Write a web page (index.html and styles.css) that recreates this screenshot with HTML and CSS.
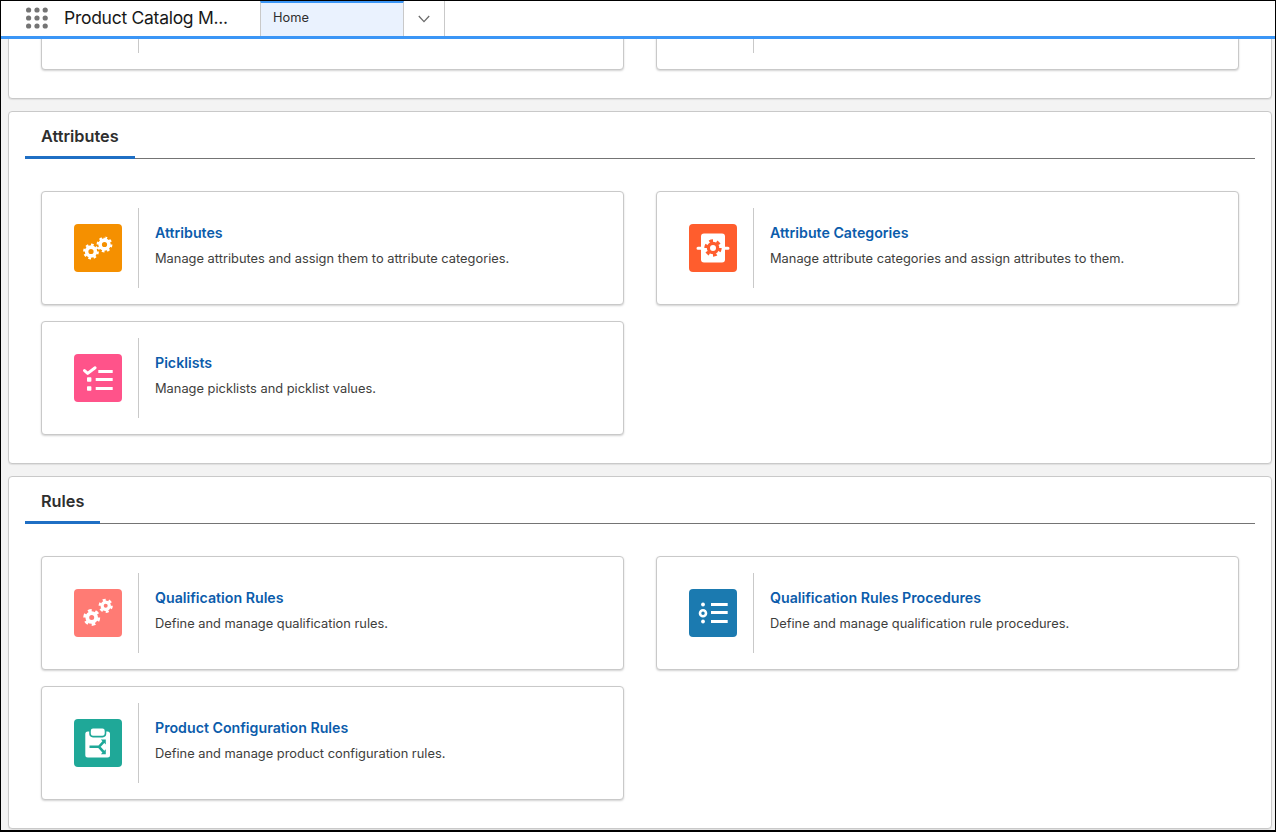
FILE: index.html
```html
<!DOCTYPE html>
<html lang="en">
<head>
<meta charset="utf-8">
<title>Product Catalog Management</title>
<link rel="stylesheet" href="styles.css">
</head>
<body>
<div class="frame">
  <header class="topbar">
    <div class="launcher" aria-label="App launcher">
      <svg viewBox="0 0 24 24" width="24" height="24"><g class="grid-dots"><circle cx="3.6" cy="4" r="2.6"/><circle cx="12" cy="4" r="2.6"/><circle cx="20.2" cy="4" r="2.6"/><circle cx="3.6" cy="12" r="2.6"/><circle cx="12" cy="12" r="2.6"/><circle cx="20.2" cy="12" r="2.6"/><circle cx="3.6" cy="20" r="2.6"/><circle cx="12" cy="20" r="2.6"/><circle cx="20.2" cy="20" r="2.6"/></g></svg>
    </div>
    <div class="app-name">Product Catalog M...</div>
    <div class="tab-active">Home</div>
    <div class="tab-more">
      <svg viewBox="0 0 12 8" width="12" height="8"><path class="chev" d="M.8 1 6 6.6 11.2 1"/></svg>
    </div>
  </header>
  <main class="scroll">
    <section class="panel panel-cut">
      <div class="grid">
        <div class="card"><div class="icon-slot"></div><div class="body"></div></div>
        <div class="card"><div class="icon-slot"></div><div class="body"></div></div>
      </div>
    </section>

    <section class="panel">
      <div class="tabs"><h2 class="tab-title">Attributes</h2></div>
      <div class="grid">
        <article class="card">
          <div class="icon-slot">
            <svg class="icon i-orange" viewBox="0 0 48 48">
              <circle class="teeth t8" cx="17" cy="27.5" r="6.8" pathLength="16"/><circle class="ring" cx="17" cy="27.5" r="4.4"/>
              <circle class="teeth t8" cx="30.5" cy="20.5" r="6.8" pathLength="16"/><circle class="ring" cx="30.5" cy="20.5" r="4.4"/>
            </svg>
          </div>
          <div class="body"><a class="title">Attributes</a><p class="desc">Manage attributes and assign them to attribute categories.</p></div>
        </article>
        <article class="card">
          <div class="icon-slot">
            <svg class="icon i-red" viewBox="0 0 48 48">
              <path class="wl round" d="M9 24.2h3M36 24.2h3"/>
              <rect class="w" x="12" y="9.5" width="24" height="29" rx="3"/>
              <circle class="teeth-red" cx="24" cy="24" r="7.200" pathLength="12"/><circle class="ring-red" cx="24" cy="24" r="4.600"/>
            </svg>
          </div>
          <div class="body"><a class="title">Attribute Categories</a><p class="desc">Manage attribute categories and assign attributes to them.</p></div>
        </article>
        <article class="card">
          <div class="icon-slot">
            <svg class="icon i-pink" viewBox="0 0 48 48">
              <path class="check" d="M10.5 16.6l3.200 2.800 7.400-5.600"/>
              <path class="wl" d="M24.300 17.500h14.400M21.700 25.500h17M21.700 34.500h17"/>
              <rect class="w" x="13" y="23.300" width="4.400" height="4.400" rx=".8"/><rect class="w" x="13" y="32.300" width="4.400" height="4.400" rx=".8"/>
            </svg>
          </div>
          <div class="body"><a class="title">Picklists</a><p class="desc">Manage picklists and picklist values.</p></div>
        </article>
      </div>
    </section>

    <section class="panel">
      <div class="tabs"><h2 class="tab-title">Rules</h2></div>
      <div class="grid">
        <article class="card">
          <div class="icon-slot">
            <svg class="icon i-salmon" viewBox="0 0 48 48">
              <circle class="teeth t6" cx="17.7" cy="28.500" r="7" pathLength="12"/><circle class="ring-big" cx="17.700" cy="28.500" r="4.400"/>
              <circle class="teeth t6s" cx="31.700" cy="16.800" r="5.800" pathLength="12"/><circle class="rings" cx="31.700" cy="16.800" r="3.600"/>
            </svg>
          </div>
          <div class="body"><a class="title">Qualification Rules</a><p class="desc">Define and manage qualification rules.</p></div>
        </article>
        <article class="card">
          <div class="icon-slot">
            <svg class="icon i-blue" viewBox="0 0 48 48">
              <circle class="w" cx="14" cy="15.500" r="1.900"/><circle class="ring-b" cx="14" cy="24.200" r="3"/><circle class="w" cx="14" cy="32.500" r="1.900"/>
              <path class="wl" d="M22 15.500h16.700M22 23.500h16.700M22 32.500h16.700"/>
            </svg>
          </div>
          <div class="body"><a class="title">Qualification Rules Procedures</a><p class="desc">Define and manage qualification rule procedures.</p></div>
        </article>
        <article class="card">
          <div class="icon-slot">
            <svg class="icon i-teal" viewBox="0 0 48 48">
              <rect class="w" x="11.300" y="12.500" width="24.700" height="26" rx="2.500"/>
              <rect class="clip" x="16" y="8.800" width="15.500" height="8.800" rx="3"/>
              <path class="share" d="M15.500 27.800h9.500l5-5.500M25 27.800l5 5.500"/>
              <path class="share-head" d="M26.800 20.400h5v5zM26.800 35.200h5v-5z"/>
            </svg>
          </div>
          <div class="body"><a class="title">Product Configuration Rules</a><p class="desc">Define and manage product configuration rules.</p></div>
        </article>
      </div>
    </section>
  </main>
</div>
</body>
</html>
```

FILE: styles.css
```css
* { box-sizing: border-box; }
html, body { margin: 0; padding: 0; }
body { font-family: Inter, "Open Sans", "Liberation Sans", sans-serif; color: #2e2e2e; }

.frame {
  width: 1276px;
  height: 832px;
  display: flex;
  flex-direction: column;
  overflow: hidden;
  border: 1px solid #000;
  border-bottom-width: 2px;
  background: #f3f3f3;
}

.topbar {
  flex: none;
  height: 38px;
  display: flex;
  background: #fff;
  border-bottom: 3px solid #3b96f6;
}
.launcher { width: 63px; padding: 5px 0 0 24px; }
.launcher svg { display: block; }
.grid-dots { fill: #747474; }
.app-name { width: 196px; font-size: 17.500px; line-height: 33px; letter-spacing: -.27px; color: #181818; white-space: nowrap; }
.tab-active {
  width: 144px;
  height: 35px;
  padding-left: 12px;
  font-size: 12.800px;
  line-height: 29px;
  color: #2e2e2e;
  background: #eaf2fe;
  border: solid #c9c9c9;
  border-width: 0 1px;
  border-top: 2px solid #3b96f6;
}
.tab-more {
  width: 41px;
  height: 35px;
  display: flex;
  align-items: center;
  justify-content: center;
  border-right: 1px solid #c9c9c9;
}
.chev { fill: none; stroke: #6b6b6b; stroke-width: 1.300; }

.scroll { flex: 1; overflow: hidden; padding: 0 3px 0 7px; }

.panel {
  background: #fff;
  border: 1px solid #c9c9c9;
  border-radius: 4px;
  box-shadow: 0 1px 1px rgba(0,0,0,.08);
  padding: 0 16px 28px;
  margin-bottom: 12px;
}
.panel-cut { margin-top: -85px; padding-top: 0; }
.panel-cut .card { height: 115px; }

.tabs { border-bottom: 1px solid #747474; height: 47px; margin-bottom: 32px; }
.tab-title {
  display: inline-block;
  margin: 0;
  height: 47px;
  padding: 14px 16px 0;
  font-size: 16.300px;
  line-height: 20px;
  font-weight: 600;
  color: #2e2e2e;
  border-bottom: 3px solid #1f6fc4;
}

.grid {
  display: grid;
  grid-template-columns: 583px 583px;
  column-gap: 32px;
  row-gap: 16px;
  padding: 0 16px;
}
.card {
  height: 114px;
  display: flex;
  align-items: center;
  background: #fff;
  border: 1px solid #c9c9c9;
  border-radius: 4px;
  box-shadow: 0 1px 2px rgba(0,0,0,.18);
}
.icon-slot {
  flex: none;
  width: 97px;
  height: 80px;
  padding: 16px 0 0 32px;
  border-right: 1px solid #c9c9c9;
}
.body { padding: 0 16px 5px; }
.title {
  display: block;
  font-size: 14.200px;
  line-height: 20px;
  font-weight: 600;
  color: #0b5cab;
}
.desc { margin: 6px 0 0; font-size: 12.850px; line-height: 20px; color: #3e3e3c; }

.icon { display: block; width: 48px; height: 48px; border-radius: 4px; }
.i-orange { background: #f59000; --bg: #f59000; }
.i-red { background: #ff5d2d; --bg: #ff5d2d; }
.i-pink { background: #ff538a; --bg: #ff538a; }
.i-salmon { background: #ff7b74; --bg: #ff7b74; }
.i-blue { background: #1b7ab0; --bg: #1b7ab0; }
.i-teal { background: #1fa898; --bg: #1fa898; }

.w { fill: #fff; }
.wl { fill: none; stroke: #fff; stroke-width: 3; }
.round { stroke-linecap: round; }
.check { fill: none; stroke: #fff; stroke-width: 3; stroke-linecap: round; stroke-linejoin: round; }
.teeth { fill: none; stroke: #fff; stroke-width: 2.200; stroke-dasharray: 1 1; }
.t6 { stroke-width: 3; }
.t6s { stroke-width: 2.600; }
.ring { fill: var(--bg); stroke: #fff; stroke-width: 3.600; }
.ring-big { fill: var(--bg); stroke: #fff; stroke-width: 3.800; }
.rings { fill: var(--bg); stroke: #fff; stroke-width: 3.200; }
.teeth-red { fill: none; stroke: #ff5d2d; stroke-width: 3; stroke-dasharray: 1 1; }
.ring-red { fill: #fff; stroke: #ff5d2d; stroke-width: 3.200; }
.ring-b { fill: var(--bg); stroke: #fff; stroke-width: 2.600; }
.clip { fill: #fff; stroke: var(--bg); stroke-width: 1.600; }
.share { fill: none; stroke: var(--bg); stroke-width: 2.600; }
.share-head { fill: var(--bg); }
```
